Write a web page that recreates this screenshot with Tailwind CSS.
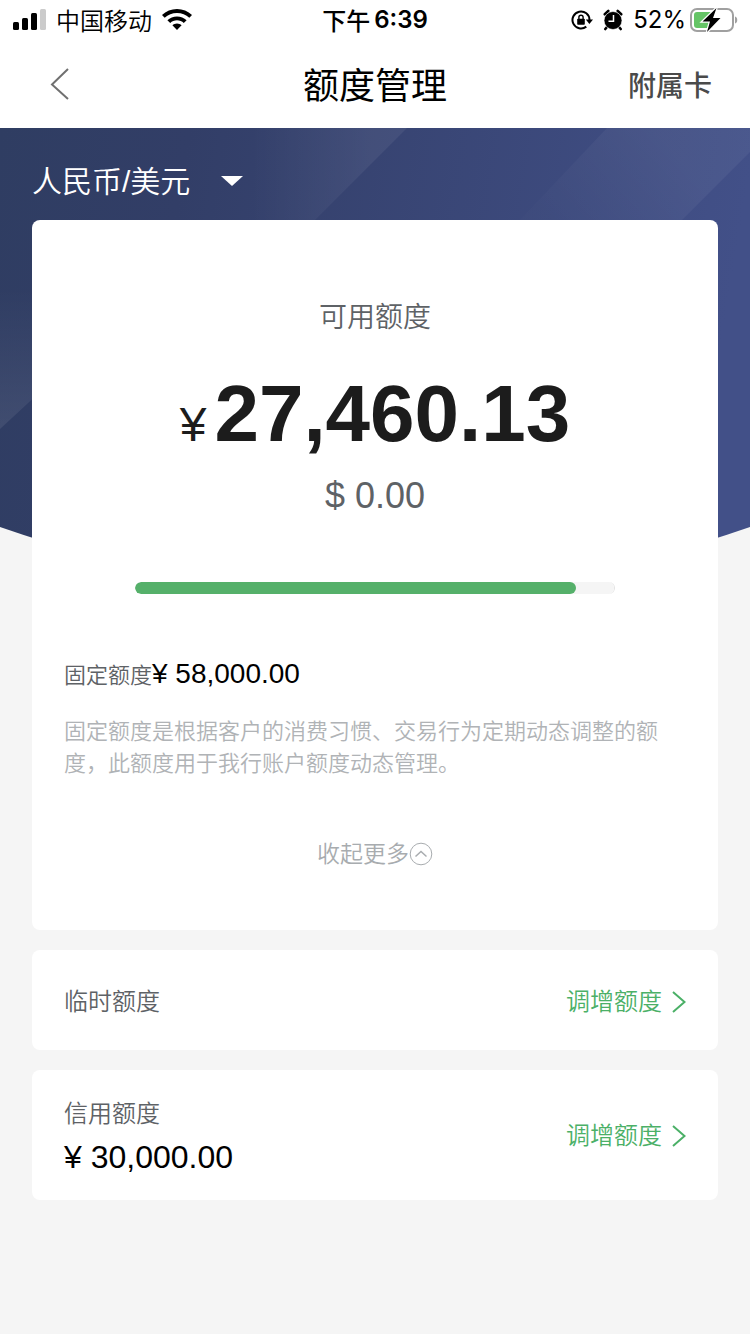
<!DOCTYPE html>
<html lang="zh-CN">
<head>
<meta charset="utf-8">
<meta name="viewport" content="width=device-width, initial-scale=1">
<title>额度管理</title>
<script src="https://cdn.jsdelivr.net/npm/@tailwindcss/browser@4"></script>
</head>
<body class="min-h-screen bg-[#f5f5f5] font-['Liberation_Sans','Noto_Sans_CJK_SC',sans-serif] text-black">

<!-- Status bar -->
<div class="grid h-10 grid-cols-[1fr_auto_1fr] items-center bg-white px-3 font-['Inter','Noto_Sans_CJK_SC',sans-serif] text-2xl">
  <div class="flex items-center gap-2.5">
    <svg class="h-[22px] w-[34px]" viewBox="0 0 34 22" aria-hidden="true">
      <rect x="1" y="13" width="6" height="8" rx="1.5"/>
      <rect x="10" y="9" width="6" height="12" rx="1.5"/>
      <rect x="19" y="4" width="6" height="17" rx="1.5"/>
      <rect x="28" y="0" width="6" height="21" rx="1.5" fill="#cbcbcb"/>
    </svg>
    <span class="font-['Noto_Sans_CJK_SC',sans-serif] leading-10 font-[350]">中国移动</span>
    <svg class="h-[22px] w-[30px]" viewBox="0 0 30 22" aria-hidden="true">
      <path d="M15 0c5.700 0 11 2.300 15 6.100l-2.700 2.700C24 5.700 19.700 3.900 15 3.900S6 5.700 2.700 8.800L0 6.100C4 2.300 9.300 0 15 0z"/>
      <path d="M15 7.400c3.700 0 7.100 1.500 9.600 3.900l-2.800 2.700c-1.800-1.700-4.200-2.700-6.800-2.700s-5 1-6.800 2.700l-2.800-2.700c2.500-2.400 5.900-3.900 9.600-3.900z"/>
      <path d="M15 14.400c1.800 0 3.400.7 4.600 1.800L15 21l-4.600-4.800c1.200-1.100 2.800-1.800 4.600-1.800z"/>
    </svg>
  </div>
  <div class="flex items-center gap-1 leading-10"><span class="font-['Noto_Sans_CJK_SC',sans-serif] font-medium">下午</span><span class="font-semibold">6:39</span></div>
  <div class="flex items-center justify-end">
    <svg class="mr-2.5 h-[22px] w-[22px]" viewBox="0 0 22 22" aria-hidden="true">
      <path d="M18.500 11a8.500 8.500 0 1 0-3.200 6.600" fill="none" stroke="#000" stroke-width="2"/>
      <path d="M14.800 10.500h7.200l-3.600 4.500z"/>
      <rect x="6.200" y="9.700" width="7.600" height="6" rx="0.800"/>
      <path d="M7.900 10V8.300a2.100 2.100 0 0 1 4.200 0V10" fill="none" stroke="#000" stroke-width="1.400"/>
    </svg>
    <svg class="mr-2.5 h-[22px] w-5" viewBox="0 0 20 22" aria-hidden="true">
      <path d="M1.800 5.300 5.300 2M18.200 5.300 14.700 2M4 18 2.300 20M16 18 17.700 20" stroke="#000" stroke-width="2.600" stroke-linecap="round"/>
      <circle cx="10" cy="11.500" r="9" stroke="#fff" stroke-width="0.600"/>
      <path d="M10.500 6v6.200H5.500" fill="none" stroke="#fff" stroke-width="1.500"/>
    </svg>
    <span class="leading-10">52%</span>
    <svg class="ml-1 h-6 w-12" viewBox="0 0 48 24" aria-hidden="true">
      <rect x="1" y="1" width="42" height="22" rx="6" fill="#fff" stroke="#a0a0a0" stroke-width="2"/>
      <path d="M7 4h16v16H7a3 3 0 0 1-3-3V7a3 3 0 0 1 3-3z" fill="#65c466"/>
      <path d="M45 8.500c3 .6 3 6.400 0 7z" fill="#a0a0a0"/>
      <path d="M26.500 0 12.500 13.500h7.500L17 24 30.500 10H23z" stroke="#fff" stroke-width="2.500" paint-order="stroke"/>
    </svg>
  </div>
</div>

<!-- Title bar -->
<header class="grid h-22 grid-cols-[1fr_auto_1fr] items-center bg-white px-9.5">
  <button type="button" aria-label="返回" class="flex h-8 w-10 items-center pl-2.5">
    <svg class="h-8 w-6" viewBox="0 0 24 32" fill="none" stroke="#707070" stroke-width="2" aria-hidden="true"><path d="M20 1 4 16.500 20 31"/></svg>
  </button>
  <h1 class="pt-1.5 text-4xl">额度管理</h1>
  <button type="button" class="justify-self-end pt-1.5 text-[28px] font-medium text-[#4a4a4a]">附属卡</button>
</header>

<div class="relative">
  <!-- Backdrop -->
  <svg class="absolute inset-x-0 top-0 h-[450px] w-full" viewBox="0 0 750 450" preserveAspectRatio="none" aria-hidden="true">
    <defs>
      <linearGradient id="base" x1="0" y1="0" x2="1" y2="0.100"><stop offset="0" stop-color="#2f3d62"/><stop offset="0.250" stop-color="#323e67"/><stop offset="1" stop-color="#425088"/></linearGradient>
      <linearGradient id="b1" gradientUnits="userSpaceOnUse" x1="250" y1="60" x2="370" y2="60"><stop offset="0" stop-color="#fff" stop-opacity="0"/><stop offset="1" stop-color="#fff" stop-opacity="0.060"/></linearGradient>
      <linearGradient id="b2" gradientUnits="userSpaceOnUse" x1="0" y1="160" x2="0" y2="300"><stop offset="0" stop-color="#fff" stop-opacity="0"/><stop offset="1" stop-color="#fff" stop-opacity="0.080"/></linearGradient>
      <linearGradient id="b3" gradientUnits="userSpaceOnUse" x1="550" y1="92" x2="650" y2="0"><stop offset="0" stop-color="#fff" stop-opacity="0.010"/><stop offset="1" stop-color="#fff" stop-opacity="0.050"/></linearGradient>
      <clipPath id="curve"><path d="M0 0H750V399Q375 530 0 399Z"/></clipPath>
    </defs>
    <g clip-path="url(#curve)">
      <rect width="750" height="450" fill="url(#base)"/>
      <path d="M180 0H407L315 92H150Z" fill="url(#b1)"/>
      <path d="M607 0H750V24L682 92H520Z" fill="url(#b3)"/>
      <path d="M0 130H40V264L0 301Z" fill="url(#b2)"/>
    </g>
  </svg>

  <div class="relative px-8">
    <div class="flex h-[92px] items-center pt-4">
      <div class="relative">
        <select aria-label="币种" class="block appearance-none bg-transparent pr-14 text-[30px] leading-10 font-[350] text-white outline-none">
          <option>人民币/美元</option>
        </select>
        <svg class="pointer-events-none absolute top-3.5 right-1 h-2.5 w-[22px]" viewBox="0 0 22 10" fill="#fff" aria-hidden="true"><path d="M0 0H22L11 10Z"/></svg>
      </div>
    </div>

    <main class="flex flex-col gap-5">
      <section class="rounded-lg bg-white px-8 pt-[74px] pb-13">
        <div class="flex flex-col items-center">
          <h2 class="text-[28px] leading-12 font-[350] text-[#5e6266]">可用额度</h2>
          <p class="mt-6 flex items-baseline gap-2 leading-24 text-[#1c1c1c]"><span class="text-5xl">¥</span><strong class="text-[80px] leading-24">27,460.13</strong></p>
          <p class="mt-2.5 text-4xl leading-12 text-[#5e6266]">$ 0.00</p>
          <progress aria-label="可用额度占比" value="92" max="100" class="mt-[62px] block h-3 w-[480px] max-w-full appearance-none overflow-hidden rounded-full border-r border-[#e3e3e3] bg-[#f5f5f5] [&::-webkit-progress-bar]:bg-[#f5f5f5] [&::-webkit-progress-value]:rounded-full [&::-webkit-progress-value]:bg-[#55b06a]"></progress>
        </div>
        <p class="mt-14 flex items-baseline text-[28px] leading-12"><span class="text-[22px] font-[350] text-[#5e6266]">固定额度</span>¥ 58,000.00</p>
        <p class="mt-4 pr-4 text-[22px] leading-8 font-[350] text-[#b0b3b6]">固定额度是根据客户的消费习惯、交易行为定期动态调整的额度，此额度用于我行账户额度动态管理。</p>
        <button type="button" class="mx-auto mt-[50px] flex h-12 items-center text-[23px] font-[350] text-[#a8acaf]">收起更多
          <svg class="size-6" viewBox="0 0 24 24" fill="none" stroke="#a8acaf" aria-hidden="true"><circle cx="12" cy="12" r="10.800"/><path d="M6.500 14.500 12 9.500l5.500 5" stroke-width="1.500"/></svg>
        </button>
      </section>

      <section class="flex h-25 items-center justify-between rounded-lg bg-white px-8 pt-1 text-2xl">
        <h2 class="font-[350] text-[#5e6266]">临时额度</h2>
        <a href="#temporary" class="flex items-center gap-2.5 font-[350] text-[#4bb067]">调增额度
          <svg class="h-[22px] w-3.5" viewBox="0 0 14 22" fill="none" stroke="#4bb067" stroke-width="2" aria-hidden="true"><path d="M1 1 12.500 11 1 21"/></svg>
        </a>
      </section>

      <section class="flex items-center justify-between rounded-lg bg-white px-8 pt-[23px] pb-[21px] text-2xl">
        <div>
          <h2 class="leading-10.5 font-[350] text-[#5e6266]">信用额度</h2>
          <p class="text-[32px] leading-11">¥ 30,000.00</p>
        </div>
        <a href="#credit" class="flex items-center gap-2.5 font-[350] text-[#4bb067]">调增额度
          <svg class="h-[22px] w-3.5" viewBox="0 0 14 22" fill="none" stroke="#4bb067" stroke-width="2" aria-hidden="true"><path d="M1 1 12.500 11 1 21"/></svg>
        </a>
      </section>
    </main>
  </div>
</div>
</body>
</html>
